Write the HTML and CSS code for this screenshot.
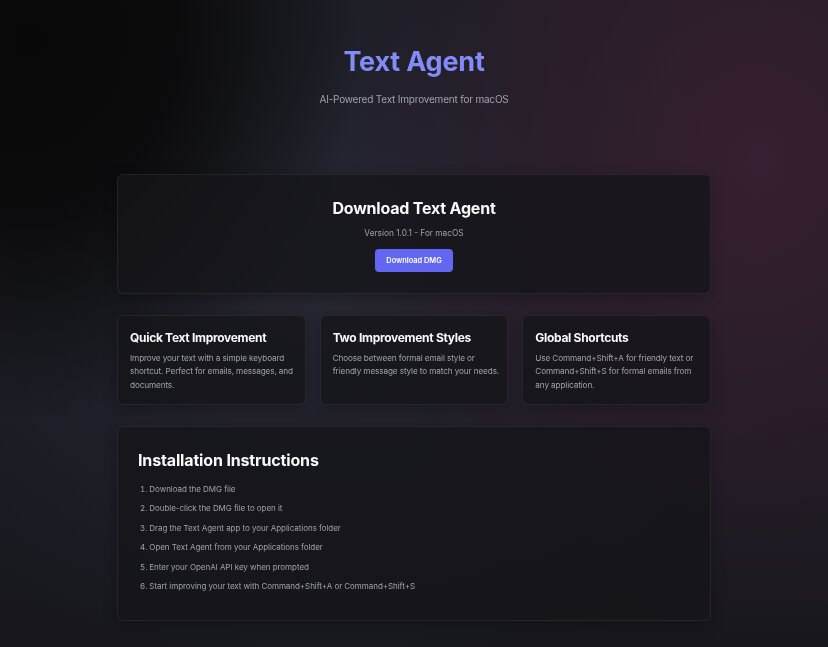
FILE: index.html
```html
<!DOCTYPE html>
<html lang="en">
<head>
<meta charset="utf-8">
<title>Text Agent</title>
<link rel="stylesheet" href="styles.css">
</head>
<body>
<div class="bg"></div>
<main class="page">
  <header class="hero">
    <h1 class="hero-title">Text Agent</h1>
    <p class="hero-sub">AI-Powered Text Improvement for macOS</p>
  </header>

  <section class="card download">
    <h2 class="download-title">Download Text Agent</h2>
    <p class="download-version">Version 1.0.1 - For macOS</p>
    <a class="btn" href="#">Download DMG</a>
  </section>

  <section class="features">
    <div class="card feature">
      <h3 class="feature-title">Quick Text Improvement</h3>
      <p class="feature-text">Improve your text with a simple keyboard shortcut. Perfect for emails, messages, and documents.</p>
    </div>
    <div class="card feature">
      <h3 class="feature-title">Two Improvement Styles</h3>
      <p class="feature-text">Choose between formal email style or friendly message style to match your needs.</p>
    </div>
    <div class="card feature">
      <h3 class="feature-title">Global Shortcuts</h3>
      <p class="feature-text">Use Command+Shift+A for friendly text or Command+Shift+S for formal emails from any application.</p>
    </div>
  </section>

  <section class="card install">
    <h2 class="install-title">Installation Instructions</h2>
    <ol class="steps">
      <li>Download the DMG file</li>
      <li>Double-click the DMG file to open it</li>
      <li>Drag the Text Agent app to your Applications folder</li>
      <li>Open Text Agent from your Applications folder</li>
      <li>Enter your OpenAI API key when prompted</li>
      <li>Start improving your text with Command+Shift+A or Command+Shift+S</li>
    </ol>
  </section>
</main>
</body>
</html>
```

FILE: styles.css
```css
* { box-sizing: border-box; }
html, body { margin: 0; padding: 0; }
body {
  font-family: "Inter", "Liberation Sans", sans-serif;
  color: #e4e4e7;
  background: #15161c;
  min-height: 647px;
  overflow: hidden;
}
.bg {
  position: fixed;
  inset: 0;
  z-index: -1;
  background:
    radial-gradient(ellipse 330px 380px at 30px 40px, #080808 0%, rgba(8,8,8,0.85) 45%, rgba(8,8,8,0) 100%),
    radial-gradient(ellipse 420px 500px at 760px 160px, rgba(58,32,50,0.9) 0%, rgba(50,30,45,0.6) 50%, rgba(40,28,40,0) 100%),
    radial-gradient(ellipse 500px 420px at 330px 260px, #272833 0%, #1e1f28 55%, rgba(26,27,36,0) 100%),
    linear-gradient(180deg, #1c1b22 0%, #1a1a22 60%, #17171d 100%);
}
.page {
  width: 594px;
  margin: 0 auto;
  padding-top: 45px;
  padding-bottom: 30px;
}
.hero {
  text-align: center;
  margin-bottom: 68px;
}
.hero-title {
  margin: 0;
  font-size: 27px;
  font-weight: 700;
  line-height: 34px;
  color: #818cf8;
  letter-spacing: -0.2px;
}
.hero-sub {
  margin: 13px 0 0;
  font-size: 10px;
  line-height: 14px;
  letter-spacing: -0.2px;
  color: #a1a1aa;
}
.card {
  background: rgba(20, 20, 25, 0.78);
  border: 1px solid rgba(255, 255, 255, 0.07);
  border-radius: 6px;
  box-shadow: 0 4px 14px rgba(0, 0, 0, 0.25);
}
.download {
  text-align: center;
  padding: 23px 20px 20px;
  height: 120px;
}
.download-title {
  margin: 0;
  font-size: 16px;
  font-weight: 700;
  line-height: 20px;
  letter-spacing: -0.2px;
  color: #fafafa;
}
.download-version {
  margin: 9px 0 0;
  font-size: 8.3px;
  line-height: 12px;
  color: #a1a1aa;
}
.btn {
  display: inline-block;
  margin-top: 10px;
  width: 78px;
  height: 23px;
  line-height: 23px;
  border-radius: 4px;
  background: #6366f1;
  color: #ffffff;
  font-size: 7.4px;
  font-weight: 600;
  text-decoration: none;
}
.features {
  display: grid;
  grid-template-columns: 1fr 1fr 1fr;
  gap: 14px;
  margin-top: 21px;
}
.feature {
  padding: 13px 7px 12px 12px;
  height: 90px;
}
.feature-title {
  margin: 0;
  font-size: 12px;
  font-weight: 700;
  line-height: 18px;
  letter-spacing: -0.3px;
  color: #fafafa;
}
.feature-text {
  margin: 5px 0 0;
  font-size: 8.2px;
  line-height: 13.3px;
  letter-spacing: -0.12px;
  color: #a1a1aa;
}
.install {
  margin-top: 21px;
  padding: 23px 20px 20px;
  height: 195px;
}
.install-title {
  margin: 0;
  font-size: 16px;
  font-weight: 700;
  line-height: 20px;
  letter-spacing: -0.15px;
  color: #fafafa;
}
.steps {
  margin: 13px 0 0;
  padding: 0 0 0 2px;
  list-style-position: inside;
  font-size: 8px;
  line-height: 12px;
  letter-spacing: -0.05px;
  color: #a1a1aa;
}
.steps li {
  margin-bottom: 7.4px;
}
```
